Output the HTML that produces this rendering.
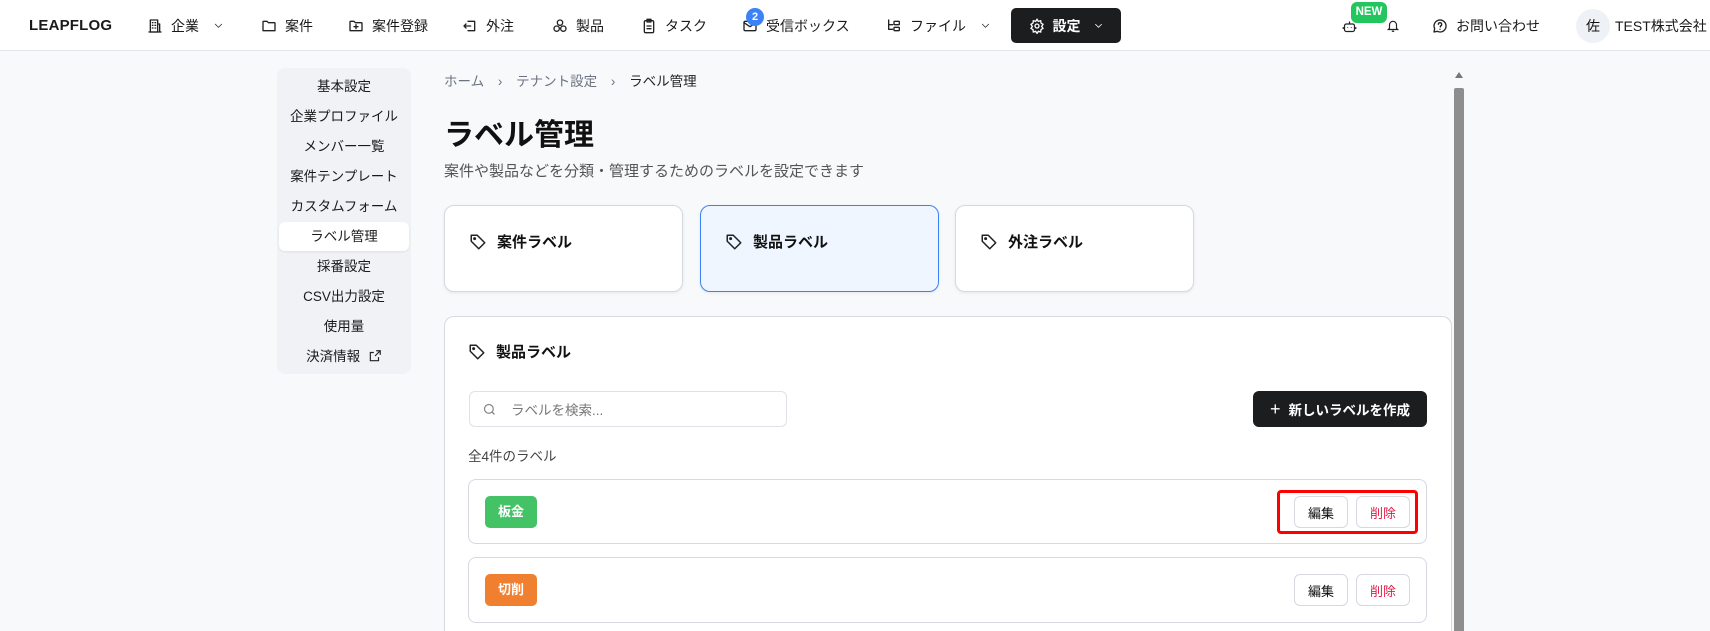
<!DOCTYPE html>
<html><head><meta charset="utf-8"><style>
*{box-sizing:border-box;margin:0;padding:0}
html{width:1710px;height:631px;overflow:hidden}
body{width:1710px;height:631px;overflow:hidden;background:#f8f9fb;font-family:"Liberation Sans","Noto Sans CJK JP",sans-serif;color:#111;position:relative}
.abs{position:absolute}
.nav{position:absolute;left:0;top:0;width:1710px;height:51px;background:#fff;border-bottom:1px solid #e2e5ea}
.ni{position:absolute;top:0;height:51px;display:flex;align-items:center;gap:8px;font-size:14px;color:#1a1a1a}
.ni svg{width:16px;height:16px;fill:none;stroke:#222;stroke-width:2;stroke-linecap:round;stroke-linejoin:round}
.chev{width:11px!important;height:11px!important;stroke-width:1.6!important;margin-left:6px}
.side{position:absolute;left:277px;top:68px;width:134px;height:306px;background:#f0f2f6;border-radius:8px}
.si{position:absolute;left:0;width:134px;text-align:center;font-size:13.5px;color:#1a1a1a;height:29px;line-height:29px}
.tab{position:absolute;top:205px;height:87px;width:239px;background:#fff;border:1px solid #d6d9df;border-radius:10px;box-shadow:0 1px 3px rgba(0,0,0,.08);display:flex;align-items:flex-start;padding-left:24px;padding-top:27px;gap:10px;font-size:15px;font-weight:bold;line-height:20px}
.tag{width:18px;height:18px;fill:none;stroke:#222;stroke-width:2;stroke-linejoin:round}
.btn{position:absolute;height:32px;width:54px;border:1px solid #d6d9df;border-radius:6px;background:#fff;font-size:13px;display:flex;align-items:center;justify-content:center}
.row{position:absolute;left:468px;width:959px;background:#fff;border:1px solid #d6d9df;border-radius:8px}
</style></head><body>
<div class="nav">
 <div class="ni" style="left:29px;font-weight:bold;font-size:15px;letter-spacing:.2px">LEAPFLOG</div>
 <div class="ni" style="left:147px"><svg viewBox="0 0 24 24"><rect x="5" y="3" width="11" height="18"/><path d="M16 9h3v12M3 21h18M8 7h1M12 7h1M8 11h1M12 11h1M8 15h1M12 15h1"/></svg>企業<svg class="chev" viewBox="0 0 24 24"><path d="M5 9l7 7 7-7"/></svg></div>
 <div class="ni" style="left:261px"><svg viewBox="0 0 24 24"><path d="M3 6a1 1 0 0 1 1-1h5l2 2h9a1 1 0 0 1 1 1v11H3z"/></svg>案件</div>
 <div class="ni" style="left:348px"><svg viewBox="0 0 24 24"><path d="M3 6a1 1 0 0 1 1-1h5l2 2h9a1 1 0 0 1 1 1v11H3z"/><path d="M12 10v6M9 13h6"/></svg>案件登録</div>
 <div class="ni" style="left:462px"><svg viewBox="0 0 24 24"><path d="M9 5h10v14H9M3 12h10M6 9l-3 3 3 3"/></svg>外注</div>
 <div class="ni" style="left:552px"><svg viewBox="0 0 24 24"><circle cx="12" cy="7" r="4"/><circle cx="7" cy="16" r="4"/><circle cx="17" cy="16" r="4"/></svg>製品</div>
 <div class="ni" style="left:641px"><svg viewBox="0 0 24 24"><rect x="5" y="4" width="14" height="18" rx="2"/><rect x="9" y="2" width="6" height="4"/><path d="M9 12h6M9 16h6"/></svg>タスク</div>
 <div class="ni" style="left:742px"><svg viewBox="0 0 24 24"><rect x="3" y="5" width="18" height="14" rx="2"/><path d="M3 7l9 6 9-6"/></svg>受信ボックス</div>
 <div class="abs" style="left:746px;top:8px;width:18px;height:18px;border-radius:50%;background:#3b82f6;color:#fff;font-size:11px;font-weight:bold;text-align:center;line-height:18px">2</div>
 <div class="ni" style="left:886px"><svg viewBox="0 0 24 24"><path d="M4 3v14h6M4 10h6"/><rect x="12" y="5" width="8" height="5" rx="1"/><rect x="12" y="14" width="8" height="5" rx="1"/></svg>ファイル<svg class="chev" viewBox="0 0 24 24"><path d="M5 9l7 7 7-7"/></svg></div>
 <div class="abs" style="left:1011px;top:8px;width:110px;height:35px;background:#1b1d1f;border-radius:5px;color:#fff;display:flex;align-items:center;justify-content:center;gap:8px;font-size:14px;font-weight:bold"><svg viewBox="0 0 24 24" style="width:16px;height:16px;fill:none;stroke:#fff;stroke-width:2"><circle cx="12" cy="12" r="3"/><path d="M12 2l2 3 3.5-1 .5 3.5 3 2-2 3 2 3-3 2-.5 3.5-3.5-1-2 3-2-3-3.5 1-.5-3.5-3-2 2-3-2-3 3-2 .5-3.5 3.5 1z"/></svg>設定<svg viewBox="0 0 24 24" style="width:11px;height:11px;fill:none;stroke:#fff;stroke-width:1.8;margin-left:4px"><path d="M5 9l7 7 7-7"/></svg></div>
 <svg class="abs" style="left:1342px;top:19px;width:15px;height:15px;fill:none;stroke:#222;stroke-width:2" viewBox="0 0 24 24"><rect x="4" y="8" width="16" height="12" rx="3"/><path d="M12 4v4M9 13v1M15 13v1M2 13v3M22 13v3"/></svg>
 <div class="abs" style="left:1351px;top:2px;width:36px;height:21px;background:#22c55e;border-radius:6px;color:#fff;font-size:11.5px;font-weight:bold;text-align:center;line-height:21px">NEW</div>
 <svg class="abs" style="left:1386px;top:18px;width:14px;height:16px;fill:none;stroke:#222;stroke-width:2" viewBox="0 0 24 24"><path d="M6 16V10a6 6 0 0 1 12 0v6l2 2H4zM10 21h4"/></svg>
 <div class="ni" style="left:1432px"><svg viewBox="0 0 24 24"><path d="M12 21a9 9 0 1 0-8-5l-1 5 5-1a9 9 0 0 0 4 1z"/><path d="M9.5 9.5a2.5 2.5 0 1 1 3 2.5v1.5M12 17h0"/></svg>お問い合わせ</div>
 <div class="abs" style="left:1576px;top:9px;width:34px;height:34px;border-radius:50%;background:#eef1f6;font-size:14px;text-align:center;line-height:34px">佐</div>
 <div class="ni" style="left:1615px">TEST株式会社</div>
</div>

<div class="side">
 <div class="si" style="left:2px;width:130px;top:154px;background:#fff;border-radius:6px;box-shadow:0 1px 2px rgba(0,0,0,.08)"></div>
 <div class="si" style="top:4px">基本設定</div>
 <div class="si" style="top:34px">企業プロファイル</div>
 <div class="si" style="top:64px">メンバー一覧</div>
 <div class="si" style="top:94px">案件テンプレート</div>
 <div class="si" style="top:124px">カスタムフォーム</div>
 <div class="si" style="top:154px">ラベル管理</div>
 <div class="si" style="top:184px">採番設定</div>
 <div class="si" style="top:214px">CSV出力設定</div>
 <div class="si" style="top:244px">使用量</div>
 <div class="si" style="top:274px">決済情報 <svg style="width:14px;height:14px;fill:none;stroke:#222;stroke-width:2;vertical-align:-2px;margin-left:4px" viewBox="0 0 24 24"><path d="M14 3h7v7M21 3l-9 9M18 14v6H4V6h6"/></svg></div>
</div>

<div class="abs" style="left:444px;top:70px;font-size:13.5px;color:#6b7280">ホーム <span style="margin:0 10px">›</span> テナント設定 <span style="margin:0 10px">›</span> <span style="color:#222">ラベル管理</span></div>
<div class="abs" style="left:444px;top:110px;font-size:30px;font-weight:bold">ラベル管理</div>
<div class="abs" style="left:444px;top:160px;font-size:15px;color:#555">案件や製品などを分類・管理するためのラベルを設定できます</div>

<div class="tab" style="left:444px"><svg class="tag" viewBox="0 0 24 24"><path d="M3 3h8l10 10-8 8L3 11z"/><circle cx="7.5" cy="7.5" r="1"/></svg>案件ラベル</div>
<div class="tab" style="left:700px;background:#eff6ff;border-color:#3b82f6"><svg class="tag" viewBox="0 0 24 24"><path d="M3 3h8l10 10-8 8L3 11z"/><circle cx="7.5" cy="7.5" r="1"/></svg>製品ラベル</div>
<div class="tab" style="left:955px"><svg class="tag" viewBox="0 0 24 24"><path d="M3 3h8l10 10-8 8L3 11z"/><circle cx="7.5" cy="7.5" r="1"/></svg>外注ラベル</div>

<div class="abs" style="left:444px;top:316px;width:1008px;height:315px;background:#fff;border:1px solid #d6d9df;border-bottom:none;border-radius:10px 10px 0 0"></div>
<div class="abs" style="left:468px;top:341px;display:flex;align-items:center;gap:10px;font-size:15px;font-weight:bold"><svg class="tag" viewBox="0 0 24 24"><path d="M3 3h8l10 10-8 8L3 11z"/><circle cx="7.5" cy="7.5" r="1"/></svg>製品ラベル</div>
<div class="abs" style="left:469px;top:391px;width:318px;height:36px;border:1px solid #dfe2e7;border-radius:6px;background:#fff;display:flex;align-items:center;padding-left:12px;gap:14px;font-size:13.5px;color:#777"><svg style="width:15px;height:15px;fill:none;stroke:#888;stroke-width:2" viewBox="0 0 24 24"><circle cx="11" cy="11" r="7"/><path d="M20 20l-4-4"/></svg>ラベルを検索...</div>
<div class="abs" style="left:1253px;top:391px;width:174px;height:36px;background:#1b1d1f;border-radius:6px;color:#fff;font-size:13.5px;font-weight:bold;display:flex;align-items:center;justify-content:center;gap:8px"><span style="font-size:18px;font-weight:normal">+</span>新しいラベルを作成</div>
<div class="abs" style="left:468px;top:445px;font-size:13.5px;color:#444">全4件のラベル</div>

<div class="row" style="top:479px;height:65px"></div>
<div class="abs" style="left:485px;top:496px;width:52px;height:32px;background:#44c266;border-radius:5px;color:#fff;font-size:13px;font-weight:bold;text-align:center;line-height:32px">板金</div>
<div class="btn" style="left:1294px;top:496px">編集</div>
<div class="btn" style="left:1356px;top:496px;color:#e11d48">削除</div>
<div class="abs" style="left:1277px;top:490px;width:141px;height:44px;border:3px solid #ff0000;border-radius:4px"></div>

<div class="row" style="top:557px;height:66px"></div>
<div class="abs" style="left:485px;top:574px;width:52px;height:32px;background:#f07f30;border-radius:5px;color:#fff;font-size:13px;font-weight:bold;text-align:center;line-height:32px">切削</div>
<div class="btn" style="left:1294px;top:574px">編集</div>
<div class="btn" style="left:1356px;top:574px;color:#e11d48">削除</div>

<div class="abs" style="left:1454px;top:88px;width:10px;height:543px;background:#8e8e8e;border-radius:2px 2px 0 0"></div>
<div class="abs" style="left:1455px;top:72px;width:0;height:0;border-left:4px solid transparent;border-right:4px solid transparent;border-bottom:6px solid #777"></div>
</body></html>
